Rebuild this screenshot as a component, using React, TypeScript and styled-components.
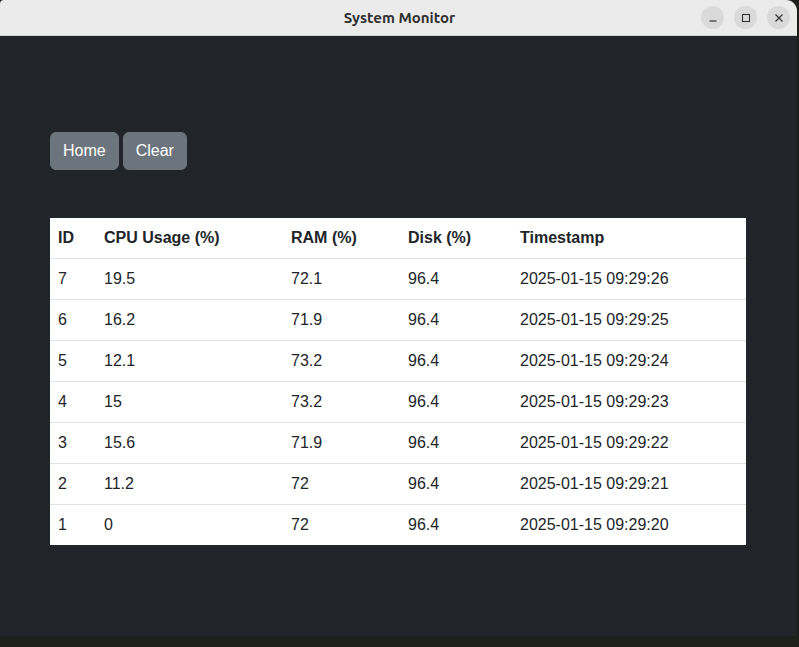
import React from "react";
import styled, { createGlobalStyle } from "styled-components";

const Global = createGlobalStyle`
  html, body { margin: 0; padding: 0; background: #1f201b; }
  body { font-family: "Liberation Sans", Arial, sans-serif; }
  * { box-sizing: border-box; }
`;

const Window = styled.div`
  width: 797px;
  height: 636px;
  display: flex;
  flex-direction: column;
  background: #212529;
  border-radius: 4px 11px 0 0;
  overflow: hidden;
  box-shadow: 0 1px 2px rgba(0,0,0,0.5);
`;

const TitleBar = styled.div`
  height: 36px;
  flex: none;
  background: #ebebeb;
  border-bottom: 1px solid #cfcfcf;
  display: flex;
  align-items: center;
  justify-content: center;
  position: relative;
`;

const Title = styled.div`
  font-family: "Ubuntu", "Noto Sans", "DejaVu Sans", sans-serif;
  font-weight: 700;
  font-size: 15px;
  color: #303030;
  margin-left: 2px;
`;

const Controls = styled.div`
  position: absolute;
  right: 7px;
  top: 6px;
  display: flex;
  gap: 10px;
`;

const Ctl = styled.div`
  width: 23px;
  height: 23px;
  border-radius: 50%;
  background: #dadada;
  display: flex;
  align-items: center;
  justify-content: center;
`;

const Content = styled.div`
  flex: 1;
  padding: 96px 51px 0 50px;
  display: flex;
  flex-direction: column;
  align-items: flex-start;
`;

const Buttons = styled.div`
  display: flex;
  gap: 4px;
  margin-bottom: 48px;
`;

const Btn = styled.button`
  font-family: "Liberation Sans", Arial, sans-serif;
  font-size: 16px;
  line-height: 24px;
  color: #fff;
  background: #6c757d;
  border: 1px solid #6c757d;
  border-radius: 6px;
  padding: 6px 12px;
  cursor: pointer;
`;

const Table = styled.table`
  width: 696px;
  border-collapse: collapse;
  background: #fff;
  color: #212529;
  font-size: 16px;
  line-height: 24px;
`;

const Th = styled.th<{ $w: number }>`
  width: ${(p) => p.$w}px;
  text-align: left;
  font-weight: 700;
  padding: 8px;
  border-bottom: 1px solid #dee2e6;
`;

const Td = styled.td`
  padding: 8px;
  border-bottom: 1px solid #dee2e6;
`;

const Row = styled.tr`
  &:last-child td { border-bottom: none; }
`;

const rows = [
  [7, "19.5", "72.1", "96.4", "2025-01-15 09:29:26"],
  [6, "16.2", "71.9", "96.4", "2025-01-15 09:29:25"],
  [5, "12.1", "73.2", "96.4", "2025-01-15 09:29:24"],
  [4, "15", "73.2", "96.4", "2025-01-15 09:29:23"],
  [3, "15.6", "71.9", "96.4", "2025-01-15 09:29:22"],
  [2, "11.2", "72", "96.4", "2025-01-15 09:29:21"],
  [1, "0", "72", "96.4", "2025-01-15 09:29:20"],
];

export default function App() {
  return (
    <>
      <Global />
      <Window>
        <TitleBar>
          <Title>System Monitor</Title>
          <Controls>
            <Ctl>
              <svg width="10" height="10" viewBox="0 0 10 10">
                <path d="M1.5 8h7" stroke="#333" strokeWidth="1.2" />
              </svg>
            </Ctl>
            <Ctl>
              <svg width="10" height="10" viewBox="0 0 10 10">
                <rect x="1.5" y="1.5" width="7" height="7" fill="none" stroke="#333" strokeWidth="1.1" />
              </svg>
            </Ctl>
            <Ctl>
              <svg width="10" height="10" viewBox="0 0 10 10">
                <path d="M1.5 1.5l7 7M8.5 1.5l-7 7" stroke="#333" strokeWidth="1.2" />
              </svg>
            </Ctl>
          </Controls>
        </TitleBar>
        <Content>
          <Buttons>
            <Btn>Home</Btn>
            <Btn>Clear</Btn>
          </Buttons>
          <Table>
            <thead>
              <tr>
                <Th $w={46}>ID</Th>
                <Th $w={187}>CPU Usage (%)</Th>
                <Th $w={117}>RAM (%)</Th>
                <Th $w={112}>Disk (%)</Th>
                <Th $w={234}>Timestamp</Th>
              </tr>
            </thead>
            <tbody>
              {rows.map((r) => (
                <Row key={r[0]}>
                  {r.map((c, i) => (
                    <Td key={i}>{c}</Td>
                  ))}
                </Row>
              ))}
            </tbody>
          </Table>
        </Content>
      </Window>
    </>
  );
}
